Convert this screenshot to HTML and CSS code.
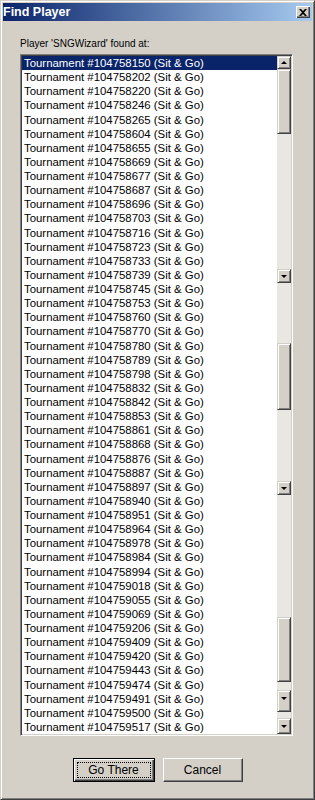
FILE: index.html
```html
<!DOCTYPE html>
<html lang="en">
<head>
    <meta charset="UTF-8">
    <title>Find Player</title>
    <link rel="stylesheet" href="styles.css">
</head>
<body>
    <div class="window">
        <div class="titlebar">
            <span class="title">Find Player</span>
            <span class="close-btn"><svg width="8" height="7" viewBox="0 0 8 7"><path d="M0 0h2l2 2 2-2h2L5 3.5 8 7H6L4 5 2 7H0l3-3.5z" fill="#000"/></svg></span>
        </div>
        <div class="content">
            <div class="label">Player 'SNGWizard' found at:</div>
            <div class="listbox">
                <div class="rows">
                    <div class="row selected">Tournament #104758150 (Sit &amp; Go)</div>
                    <div class="row">Tournament #104758202 (Sit &amp; Go)</div>
                    <div class="row">Tournament #104758220 (Sit &amp; Go)</div>
                    <div class="row">Tournament #104758246 (Sit &amp; Go)</div>
                    <div class="row">Tournament #104758265 (Sit &amp; Go)</div>
                    <div class="row">Tournament #104758604 (Sit &amp; Go)</div>
                    <div class="row">Tournament #104758655 (Sit &amp; Go)</div>
                    <div class="row">Tournament #104758669 (Sit &amp; Go)</div>
                    <div class="row">Tournament #104758677 (Sit &amp; Go)</div>
                    <div class="row">Tournament #104758687 (Sit &amp; Go)</div>
                    <div class="row">Tournament #104758696 (Sit &amp; Go)</div>
                    <div class="row">Tournament #104758703 (Sit &amp; Go)</div>
                    <div class="row">Tournament #104758716 (Sit &amp; Go)</div>
                    <div class="row">Tournament #104758723 (Sit &amp; Go)</div>
                    <div class="row">Tournament #104758733 (Sit &amp; Go)</div>
                    <div class="row">Tournament #104758739 (Sit &amp; Go)</div>
                    <div class="row">Tournament #104758745 (Sit &amp; Go)</div>
                    <div class="row">Tournament #104758753 (Sit &amp; Go)</div>
                    <div class="row">Tournament #104758760 (Sit &amp; Go)</div>
                    <div class="row">Tournament #104758770 (Sit &amp; Go)</div>
                    <div class="row">Tournament #104758780 (Sit &amp; Go)</div>
                    <div class="row">Tournament #104758789 (Sit &amp; Go)</div>
                    <div class="row">Tournament #104758798 (Sit &amp; Go)</div>
                    <div class="row">Tournament #104758832 (Sit &amp; Go)</div>
                    <div class="row">Tournament #104758842 (Sit &amp; Go)</div>
                    <div class="row">Tournament #104758853 (Sit &amp; Go)</div>
                    <div class="row">Tournament #104758861 (Sit &amp; Go)</div>
                    <div class="row">Tournament #104758868 (Sit &amp; Go)</div>
                    <div class="row">Tournament #104758876 (Sit &amp; Go)</div>
                    <div class="row">Tournament #104758887 (Sit &amp; Go)</div>
                    <div class="row">Tournament #104758897 (Sit &amp; Go)</div>
                    <div class="row">Tournament #104758940 (Sit &amp; Go)</div>
                    <div class="row">Tournament #104758951 (Sit &amp; Go)</div>
                    <div class="row">Tournament #104758964 (Sit &amp; Go)</div>
                    <div class="row">Tournament #104758978 (Sit &amp; Go)</div>
                    <div class="row">Tournament #104758984 (Sit &amp; Go)</div>
                    <div class="row">Tournament #104758994 (Sit &amp; Go)</div>
                    <div class="row">Tournament #104759018 (Sit &amp; Go)</div>
                    <div class="row">Tournament #104759055 (Sit &amp; Go)</div>
                    <div class="row">Tournament #104759069 (Sit &amp; Go)</div>
                    <div class="row">Tournament #104759206 (Sit &amp; Go)</div>
                    <div class="row">Tournament #104759409 (Sit &amp; Go)</div>
                    <div class="row">Tournament #104759420 (Sit &amp; Go)</div>
                    <div class="row">Tournament #104759443 (Sit &amp; Go)</div>
                    <div class="row">Tournament #104759474 (Sit &amp; Go)</div>
                    <div class="row">Tournament #104759491 (Sit &amp; Go)</div>
                    <div class="row">Tournament #104759500 (Sit &amp; Go)</div>
                    <div class="row">Tournament #104759517 (Sit &amp; Go)</div>
                </div>
                <div class="scrollbar">
                    <div class="sb-btn h13"><span class="arrow-up"></span></div>
                    <div class="sb-thumb h65"></div>
                    <div class="sb-track h135"></div>
                    <div class="sb-btn h14"><span class="arrow-down"></span></div>
                    <div class="sb-track h60"></div>
                    <div class="sb-thumb h67"></div>
                    <div class="sb-track h71"></div>
                    <div class="sb-btn h14"><span class="arrow-down"></span></div>
                    <div class="sb-track h122"></div>
                    <div class="sb-thumb h65"></div>
                    <div class="sb-track h8"></div>
                    <div class="sb-btn h22 top"><span class="arrow-down"></span></div>
                    <div class="sb-track h6"></div>
                    <div class="sb-btn h16"><span class="arrow-down"></span></div>
                </div>
            </div>
            <div class="buttons">
                <button class="btn default"><span class="focus">Go There</span></button>
                <button class="btn">Cancel</button>
            </div>
        </div>
    </div>
</body>
</html>
```

FILE: styles.css
```css
body {
    margin: 0;
    padding: 0;
    background-color: #d4d0c8;
    font-family: "Liberation Sans", Arial, sans-serif;
    font-size: 11.4px;
}
.window {
    width: 315px;
    height: 800px;
    box-sizing: border-box;
    border: 1px solid;
    border-color: #d4d0c8 #404040 #404040 #d4d0c8;
    box-shadow: inset 1px 1px #fff, inset -1px -1px #808080;
    padding: 2px;
    background-color: #d4d0c8;
}
.titlebar {
    height: 18px;
    background: linear-gradient(to right, #0a246a, #a6caf0);
    display: flex;
    align-items: center;
    justify-content: space-between;
    padding: 0 2px 0 0;
}
.title {
    color: white;
    font-weight: bold;
    font-size: 12.5px;
}
.close-btn {
    width: 14px;
    height: 12px;
    background-color: #d4d0c8;
    box-shadow: inset 1px 1px #fff, inset -1px -1px #404040, inset -2px -2px #808080;
    display: flex;
    align-items: center;
    justify-content: center;
}
.content {
    padding: 0 19px 0 17px;
}
.label {
    font-size: 10px;
    line-height: 14px;
    margin-top: 16px;
    height: 14px;
    margin-bottom: 3px;
}
.listbox {
    display: flex;
    height: 678px;
    border: 1px solid;
    border-color: #808080 #fff #fff #808080;
    box-shadow: inset 1px 1px #404040, inset -1px -1px #d4d0c8;
    padding: 1px;
    background-color: white;
}
.rows {
    flex: 1;
    overflow: hidden;
}
.row {
    height: 14.13px;
    line-height: 14px;
    padding-left: 2px;
    white-space: nowrap;
    color: #000;
}
.row.selected {
    background-color: #0a246a;
    color: white;
}
.scrollbar {
    width: 14px;
    display: flex;
    flex-direction: column;
}
.sb-btn, .sb-thumb {
    background-color: #d4d0c8;
    box-sizing: border-box;
    border: 1px solid;
    border-color: #d4d0c8 #404040 #404040 #d4d0c8;
    box-shadow: inset 1px 1px #fff, inset -1px -1px #808080;
}
.sb-btn {
    display: flex;
    align-items: center;
    justify-content: center;
}
.sb-btn.top {
    align-items: flex-start;
    padding-top: 6px;
}
.sb-track {
    background-color: #e9e7e2;
}
.arrow-up {
    width: 0;
    height: 0;
    border-left: 3px solid transparent;
    border-right: 3px solid transparent;
    border-bottom: 3px solid #000;
}
.arrow-down {
    width: 0;
    height: 0;
    border-left: 3px solid transparent;
    border-right: 3px solid transparent;
    border-top: 3px solid #000;
}
.h6 { height: 6px; }
.h8 { height: 8px; }
.h13 { height: 13px; }
.h14 { height: 14px; }
.h16 { height: 16px; }
.h22 { height: 22px; }
.h60 { height: 60px; }
.h65 { height: 65px; }
.h67 { height: 67px; }
.h71 { height: 71px; }
.h122 { height: 122px; }
.h135 { height: 135px; }
.buttons {
    display: flex;
    justify-content: center;
    gap: 8px;
    margin-top: 22px;
    padding-left: 2px;
}
.btn {
    width: 80px;
    height: 24px;
    font-family: "Liberation Sans", Arial, sans-serif;
    font-size: 12px;
    color: #000;
    background-color: #d4d0c8;
    border: 1px solid;
    border-color: #fff #404040 #404040 #fff;
    box-shadow: inset -1px -1px #808080;
    padding: 0;
}
.btn.default {
    width: 82px;
    border: 1px solid #000;
    box-shadow: inset 1px 1px #fff, inset -1px -1px #404040, inset -2px -2px #808080;
    padding: 3px;
}
.focus {
    display: block;
    height: 100%;
    box-sizing: border-box;
    border: 1px dotted #000;
    line-height: 14px;
}
```
